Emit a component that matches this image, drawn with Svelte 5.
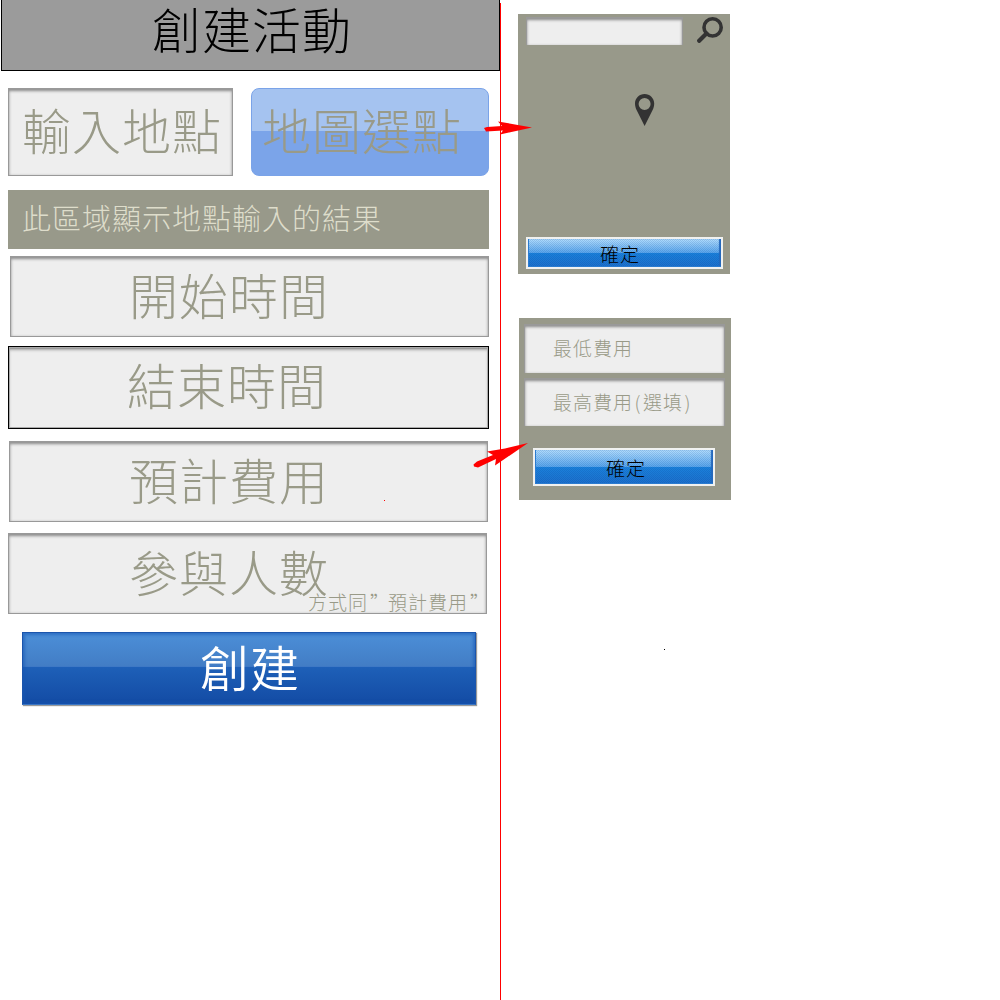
<script>
  const fields = [
    { id: 'start', label: '開始時間' },
    { id: 'end', label: '結束時間' },
    { id: 'cost', label: '預計費用' },
    { id: 'people', label: '參與人數' },
  ];
</script>

<main class="board">
  <section class="phone">
    <header class="title">創建活動</header>
    <div class="places">
      <div class="field place">輸入地點</div>
      <div class="mapbtn">地圖選點</div>
    </div>
    <div class="result">此區域顯示地點輸入的結果</div>
    {#each fields as f (f.id)}
      <div class="field row {f.id}">
        {f.label}
        {#if f.id === 'people'}<span class="note">方式同<i class="quote">”</i>預計費用<i class="quote">”</i></span>{/if}
      </div>
    {/each}
    <div class="create">創建</div>
  </section>

  <div class="divider"></div>

  <aside class="side">
    <section class="panel map">
      <div class="searchbar">
        <div class="field search"></div>
        <svg class="magnifier" width="26" height="26" viewBox="0 0 26 26">
          <circle cx="15.6" cy="10.4" r="8.6" fill="none" stroke="#333" stroke-width="3.6" />
          <path d="M9.5 16.5 L2.2 23.8" stroke="#333" stroke-width="4.2" stroke-linecap="round" />
        </svg>
      </div>
      <svg class="pin" width="20" height="32" viewBox="0 0 20 32">
        <path fill="#333" fill-rule="evenodd" d="M9.6 0 C4.3 0 0 4.2 0 9.4 C0 12 .7 14 1.7 16.2 L9.6 32 L17.5 16.2 C18.6 14 19.2 12 19.2 9.4 C19.2 4.2 14.9 0 9.6 0 Z M9.6 4 A6 6 0 1 1 9.6 16 A6 6 0 1 1 9.6 4 Z" />
      </svg>
      <div class="confirm wide">確定</div>
    </section>
    <section class="panel costs">
      <div class="field small">最低費用</div>
      <div class="field small">最高費用<i class="paren">(</i>選填<i class="paren">)</i></div>
      <div class="confirm tall">確定</div>
    </section>
  </aside>

  <svg class="marks" width="1000" height="1000" viewBox="0 0 1000 1000">
    <g fill="#f00">
      <path d="M484 128 L487 127 L502 126 L498 121.5 L532 127.5 L500 134.5 L503 130.5 L486 131.5 Z" />
      <path d="M473.5 464.5 L477 461.5 L493 455 L487 451.5 L505 448.5 L528 443 L495 465.5 L496 459 L478 467.5 L474 466.5 Z" />
      <rect x="384" y="500" width="1" height="1" />
    </g>
    <rect x="664" y="649" width="1" height="1" />
  </svg>
</main>

<style>
  :global(body) {
    margin: 0;
    background: #fff;
  }
  .board {
    position: relative;
    display: flex;
    width: 1000px;
    height: 1000px;
    overflow: hidden;
    font-family: 'Noto Sans CJK TC', sans-serif;
    font-weight: 300;
    font-size: 49px;
    letter-spacing: 1px;
    color: #999a88;
    white-space: nowrap;
  }
  .board div,
  .board header,
  .board section {
    box-sizing: border-box;
  }
  i {
    font-style: normal;
  }
  .phone {
    display: flex;
    flex-direction: column;
    width: 500px;
  }
  .title {
    height: 71px;
    margin-left: 1px;
    padding-left: 150px;
    border: 1px solid #000;
    border-top: 0;
    background: #9b9b9b;
    color: #000;
    line-height: 56px;
  }
  .places {
    display: flex;
    gap: 18px;
    margin: 17px 0 0 8px;
  }
  .field {
    border: 1px solid #999;
    border-top-width: 2px;
    background: #eee;
    box-shadow: inset 0 1px 3px rgba(0, 0, 0, 0.42);
  }
  .place {
    width: 225px;
    height: 88px;
    padding-left: 13px;
    line-height: 78px;
  }
  .mapbtn {
    width: 238px;
    height: 88px;
    padding-left: 10px;
    border: 1px solid #7aa3e8;
    border-radius: 8px;
    background: linear-gradient(#a5c3f0 42px, #7ba4e9 42px);
    line-height: 80px;
  }
  .result {
    width: 481px;
    height: 59px;
    margin: 14px 0 7px 8px;
    padding-left: 14px;
    background: #98998a;
    color: #deddcb;
    font-size: 29px;
    line-height: 54px;
  }
  .row {
    width: 479px;
    height: 81px;
    line-height: 72px;
  }
  .start {
    margin-left: 10px;
    padding-left: 118px;
  }
  .end {
    width: 481px;
    height: 83px;
    margin: 9px 0 12px 8px;
    padding-left: 118px;
    border: 1px solid #000;
    box-shadow: inset 0 0 0 1px #aaa, inset 0 2px 1px #999, inset 0 3px 3px rgba(0, 0, 0, 0.3);
    line-height: 74px;
  }
  .cost {
    margin-left: 9px;
    padding-left: 119px;
  }
  .people {
    position: relative;
    margin: 11px 0 0 8px;
    padding-left: 120px;
  }
  .note {
    position: absolute;
    right: -2px;
    bottom: -1px;
    font-size: 19px;
    line-height: 24px;
  }
  .quote {
    display: inline-block;
    box-sizing: border-box;
    width: 20px;
    padding-left: 2px;
  }
  .create {
    width: 454px;
    height: 73px;
    margin: 18px 0 0 22px;
    padding-left: 177px;
    border: 1px solid #1b55ac;
    border-bottom-color: #3b76c4;
    background: linear-gradient(#4c8fd8, #427dc5 33px, #5e91d3 33px, #1e60b8 34px, #134ba4);
    box-shadow: inset 0 0 3px 2px rgba(21, 86, 178, 0.55), 1px 1px 1px rgba(0, 0, 0, 0.4);
    color: #fff;
    font-weight: 350;
    line-height: 66px;
  }
  .divider {
    width: 1px;
    margin-top: 3px;
    background: #f00;
  }
  .side {
    display: flex;
    flex-direction: column;
    gap: 44px;
    padding: 14px 0 0 17px;
    font-size: 19px;
  }
  .panel {
    display: flex;
    flex-direction: column;
    width: 212px;
    background: #98998a;
  }
  .map {
    height: 260px;
    padding: 2px 7px 5px 8px;
  }
  .searchbar {
    display: flex;
    justify-content: space-between;
    align-items: center;
    height: 28px;
  }
  .search {
    width: 157px;
    height: 28px;
    border-bottom-width: 0;
    margin-top: 2px;
  }
  .pin {
    margin: 50px 0 0 109px;
  }
  .costs {
    height: 182px;
    margin-left: 1px;
    padding: 6px 6px 14px 5px;
  }
  .small {
    height: 49px;
    margin-bottom: 5px;
    padding-left: 28px;
    border-bottom: 0;
    line-height: 43px;
  }
  .paren {
    display: inline-block;
    width: 10px;
    text-align: center;
  }
  .confirm {
    border: 2px solid #f0f1f0;
    background:
      repeating-conic-gradient(rgba(0, 45, 130, 0.14) 0 25%, transparent 0 50%) 0 0 / 2px 2px,
      linear-gradient(#b2defe, #59a6ec 49%, #1b82dc 50%, #1c70cc);
    box-shadow: inset 1px -1px 0 #2a7bd0, inset -2px 0 1px #2468bc;
    color: #000;
  }
  .wide {
    width: 197px;
    height: 32px;
    margin-top: auto;
    padding-left: 72px;
    line-height: 29px;
  }
  .tall {
    width: 182px;
    height: 38px;
    margin: 17px 0 0 9px;
    padding-left: 71px;
    line-height: 35px;
  }
  .marks {
    position: absolute;
    inset: 0;
  }
</style>
